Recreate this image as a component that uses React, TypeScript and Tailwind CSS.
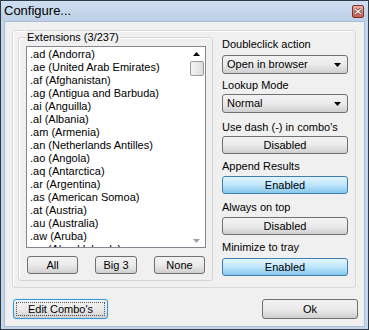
import React from 'react';

const items = [
  '.ad (Andorra)',
  '.ae (United Arab Emirates)',
  '.af (Afghanistan)',
  '.ag (Antigua and Barbuda)',
  '.ai (Anguilla)',
  '.al (Albania)',
  '.am (Armenia)',
  '.an (Netherlands Antilles)',
  '.ao (Angola)',
  '.aq (Antarctica)',
  '.ar (Argentina)',
  '.as (American Somoa)',
  '.at (Austria)',
  '.au (Australia)',
  '.aw (Aruba)',
  '.ax (Aland Islands)',
];

const grayFace =
  'rounded-[3px] border border-[#707070] bg-gradient-to-b from-[#f2f2f2] via-[#ebebeb] to-[#cfcfcf] text-black';
const grayBtn = `flex items-center justify-center ${grayFace}`;
const blueBtn =
  'flex items-center justify-center rounded-[3px] border border-[#3c7fb1] bg-gradient-to-b from-[#e3f4fc] via-[#bee6fd] to-[#86c6ea] text-black';

const Combo = ({ value }: { value: string }) => (
  <div className={`${grayFace} flex items-center justify-between h-[19px] pl-[4px] pr-[6px]`}>
    <span>{value}</span>
    <svg width="7" height="4" viewBox="0 0 7 4">
      <path d="M0 0h7L3.5 4z" fill="#000" />
    </svg>
  </div>
);

export default function App() {
  return (
    <div
      className="w-[369px] h-[330px] border border-[#2e3a46] bg-[#c3d6eb] flex flex-col text-[11px] leading-[13px] text-black"
      style={{ fontFamily: '"Liberation Sans", Arial, sans-serif' }}
    >
      {/* Title bar */}
      <div className="h-[20px] flex items-center justify-between pl-[3px] pr-[4px] bg-gradient-to-b from-[#cfdff0] to-[#bccfe5]">
        <span className="text-[13px] leading-[16px] text-black">Configure...</span>
        <div className="w-[12px] h-[13px] rounded-[2px] border border-[#7b332c] bg-gradient-to-b from-[#eab0a4] to-[#c85a4c] flex items-center justify-center">
          <svg width="8" height="7" viewBox="0 0 8 7">
            <path d="M1 1l6 5M7 1L1 6" stroke="#5a2a24" strokeWidth="2.6" />
            <path d="M1 1l6 5M7 1L1 6" stroke="#fff" strokeWidth="1.4" />
          </svg>
        </div>
      </div>

      {/* Client */}
      <div className="flex-1 mx-[3px] mb-[2px] border border-[#a9bdd2] bg-[#f0f0f0] flex flex-col">
        <div className="ml-[7px] mt-[8px] w-[344px] h-[258px] rounded-[3px] border border-[#d9d9d9] shadow-[inset_1px_1px_0_#fff] flex">
          {/* Extensions group */}
          <div className="relative ml-[5px] mt-[6px] w-[195px] h-[244px] rounded-[3px] border border-[#d5d5d5] shadow-[inset_1px_1px_0_#fff]">
            <span className="absolute left-[7px] top-[-7px] px-[1px] bg-[#f0f0f0]">Extensions (3/237)</span>
            <div className="ml-[7px] mt-[8px] w-[180px] h-[202px] border border-[#828790] bg-white flex overflow-hidden">
              <div className="flex-1 pl-[3px] pt-[1px] overflow-hidden">
                {items.map((t) => (
                  <div key={t} className="h-[13px] whitespace-nowrap">
                    {t}
                  </div>
                ))}
              </div>
              <div className="w-[17px] flex flex-col items-center pt-[5px] pb-[4px]">
                <svg width="7" height="4" viewBox="0 0 7 4">
                  <path d="M0 4h7L3.5 0z" fill="#000" />
                </svg>
                <div className="mt-[5px] w-[14px] h-[15px] rounded-[2px] border border-[#9a9a9a] bg-gradient-to-r from-[#f4f4f4] to-[#dcdcdc]" />
                <div className="flex-1" />
                <svg width="7" height="4" viewBox="0 0 7 4">
                  <path d="M0 0h7L3.5 4z" fill="#a0a0a0" />
                </svg>
              </div>
            </div>
            <div className="flex mt-[8px] ml-[8px]">
              <div className={`${grayBtn} w-[51px] h-[18px]`}>All</div>
              <div className={`${grayBtn} w-[42px] h-[18px] ml-[17px]`}>Big 3</div>
              <div className={`${grayBtn} w-[51px] h-[18px] ml-[17px]`}>None</div>
            </div>
          </div>

          {/* Options */}
          <div className="ml-[9px] w-[126px] flex flex-col">
            <div className="mt-[5px] h-[16px] leading-[16px]">Doubleclick action</div>
            <div className="mt-[3px]"><Combo value="Open in browser" /></div>
            <div className="mt-[3px] h-[16px] leading-[16px]">Lookup Mode</div>
            <div className="mt-[1px]"><Combo value="Normal" /></div>
            <div className="mt-[6px] h-[16px] leading-[16px]">Use dash (-) in combo's</div>
            <div className={`${grayBtn} mt-[1px] h-[18px]`}>Disabled</div>
            <div className="mt-[4px] h-[16px] leading-[16px]">Append Results</div>
            <div className={`${blueBtn} mt-[2px] h-[18px]`}>Enabled</div>
            <div className="mt-[5px] h-[16px] leading-[16px]">Always on top</div>
            <div className={`${grayBtn} mt-[2px] h-[18px]`}>Disabled</div>
            <div className="mt-[4px] h-[16px] leading-[16px]">Minimize to tray</div>
            <div className={`${blueBtn} mt-[3px] h-[18px]`}>Enabled</div>
          </div>
        </div>

        {/* Bottom buttons */}
        <div className="flex justify-between ml-[8px] mr-[6px] mt-[11px]">
          <div className="w-[95px] h-[20px] rounded-[3px] border border-[#3399dd] shadow-[0_0_1px_#7cc4f0] bg-gradient-to-b from-[#f2f2f2] via-[#ebebeb] to-[#cfcfcf] p-[2px]">
            <div className="w-full h-full border border-dotted border-[#555] flex items-center justify-center">
              Edit Combo's
            </div>
          </div>
          <div className={`${grayBtn} w-[96px] h-[20px]`}>Ok</div>
        </div>
      </div>
    </div>
  );
}
